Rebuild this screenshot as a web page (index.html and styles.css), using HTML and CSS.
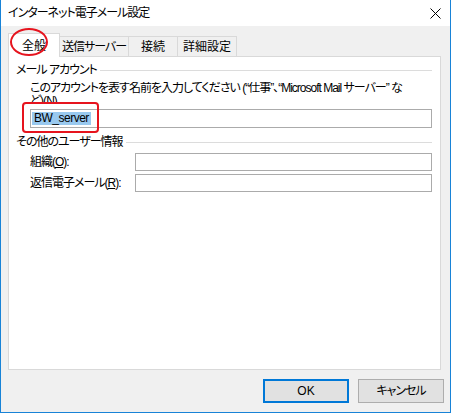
FILE: index.html
```html
<!DOCTYPE html>
<html lang="ja">
<head>
<meta charset="utf-8">
<title>インターネット電子メール設定</title>
<link rel="stylesheet" href="styles.css">
</head>
<body>
<div class="window">
  <div class="titlebar">
    <span class="title">インターネット電子メール設定</span>
    <svg class="close" width="11" height="11" viewBox="0 0 11 11"><path d="M0.5 0.5 L10.5 10.5 M10.5 0.5 L0.5 10.5" stroke="#000" stroke-width="1" fill="none"/></svg>
  </div>
  <div class="client">
    <div class="tabs">
      <div class="tab sel">全般</div>
      <div class="tab w70">送信サーバー</div>
      <div class="tab w50">接続</div>
      <div class="tab w60">詳細設定</div>
    </div>
    <div class="panel">
      <div class="group-head g1"><span>メール アカウント</span><i class="rule"></i></div>
      <div class="desc">このアカウントを表す名前を入力してください (“仕事”、“Microsoft Mail サーバー” な<br>ど)(<u>N</u>)</div>
      <div class="edit full"><span class="selection">BW_server</span></div>
      <div class="group-head g2"><span>その他のユーザー情報</span><i class="rule"></i></div>
      <div class="row r1"><span class="label">組織(<u>O</u>):</span><div class="edit short"></div></div>
      <div class="row r2"><span class="label">返信電子メール(<u>R</u>):</span><div class="edit short"></div></div>
    </div>
    <div class="footer">
      <button class="btn default">OK</button>
      <button class="btn">キャンセル</button>
    </div>
  </div>
  <div class="mark-circle"></div>
  <div class="mark-rect"></div>
</div>
</body>
</html>
```
FILE: styles.css
```css
* { box-sizing: border-box; }
html, body { margin: 0; padding: 0; }
body {
  width: 451px;
  height: 413px;
  overflow: hidden;
  font-family: "Liberation Sans", "Noto Sans CJK JP", sans-serif;
  font-size: 12px;
  color: #000;
  font-feature-settings: "palt";
  letter-spacing: -1px;
}
.window {
  position: relative;
  width: 451px;
  height: 413px;
  border-left: 1px solid #1883d7;
  border-right: 1px solid #1883d7;
  border-bottom: 1px solid #1883d7;
  display: flex;
  flex-direction: column;
  background: #f0f0f0;
}
.titlebar {
  height: 26px;
  background: #fff;
  display: flex;
  align-items: center;
  justify-content: space-between;
  padding: 0 9px 0 7px;
}
.title { line-height: 14px; }
.close { display: block; }
.client {
  flex: 1;
  display: flex;
  flex-direction: column;
  padding: 0 0 0 7px;
}
.tabs {
  height: 30px;
  display: flex;
  align-items: flex-end;
}
.tab {
  height: 20px;
  border: 1px solid #d9d9d9;
  border-bottom: none;
  background: #f0f0f0;
  display: flex;
  align-items: center;
  justify-content: center;
  margin-left: -1px;
  line-height: 14px;
  padding-top: 1px;
  white-space: nowrap;
  letter-spacing: 0;
}
.tab.sel {
  position: relative;
  z-index: 1;
  width: 52px;
  height: 24px;
  margin-left: 0;
  margin-bottom: -1px;
  background: #fff;
  padding-top: 0;
}
.w70 { width: 70px; letter-spacing: -1px; }
.w50 { width: 50px; }
.w60 { width: 60px; }
.panel {
  width: 433px;
  height: 314px;
  background: #fff;
  border: 1px solid #d9d9d9;
  padding: 0 8px 0 7px;
}
.group-head {
  display: flex;
  align-items: center;
  height: 13px;
  line-height: 13px;
  white-space: nowrap;
}
.group-head.g1 { margin-top: 7px; }
.group-head.g2 { margin-top: 8px; }
.rule {
  flex: 1;
  height: 1px;
  background: #dcdcdc;
  margin-left: 3px;
}
.desc {
  margin: 5px 0 0 14px;
  height: 20px;
  line-height: 13px;
  white-space: nowrap;
  overflow: hidden;
}
.edit {
  height: 19px;
  border: 1px solid #ababab;
  background: #fff;
  display: flex;
  align-items: center;
}
.edit.full {
  margin: 7px 0 0 14px;
  padding-left: 1px;
}
.selection {
  background: #99c9ef;
  line-height: 13px;
  height: 13px;
  padding: 0 2px 0 2px;
  letter-spacing: -0.5px;
}
.row {
  display: flex;
  align-items: center;
  margin-left: 14px;
}
.row.r1 { margin-top: 4px; }
.row.r2 { margin-top: 3px; }
.label {
  width: 105px;
  line-height: 14px;
  white-space: nowrap;
}
.edit.short {
  width: 297px;
  height: 18px;
}
.footer {
  display: flex;
  justify-content: flex-end;
  gap: 9px;
  padding: 9px 6px 0 0;
}
.btn {
  width: 86px;
  height: 24px;
  margin: 0;
  padding: 0;
  background: #e1e1e1;
  border: 1px solid #adadad;
  font: inherit;
  font-size: 12px;
  color: #000;
  line-height: 14px;
  letter-spacing: -1px;
}
.btn.default { border: 2px solid #0078d7; letter-spacing: 0; }
.mark-circle {
  position: absolute;
  left: 9px;
  top: 28px;
  width: 38px;
  height: 28px;
  border: 2px solid #e6141e;
  border-radius: 50%;
  z-index: 5;
}
.mark-rect {
  position: absolute;
  left: 21px;
  top: 102px;
  width: 77px;
  height: 31px;
  border: 2px solid #e6141e;
  border-radius: 4px;
  z-index: 5;
}
```
